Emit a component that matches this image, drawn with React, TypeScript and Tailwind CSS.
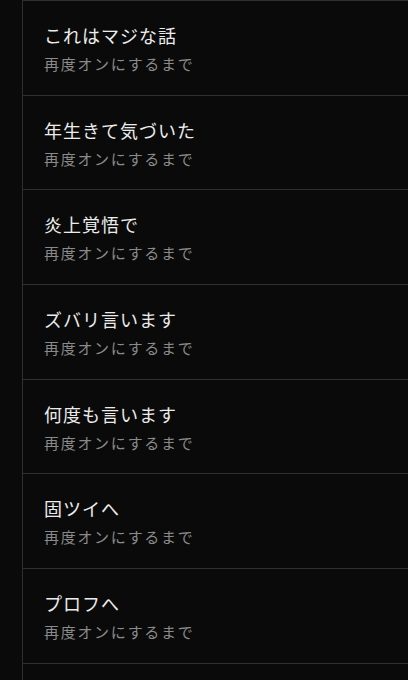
import React from "react";

const items = [
  "これはマジな話",
  "年生きて気づいた",
  "炎上覚悟で",
  "ズバリ言います",
  "何度も言います",
  "固ツイへ",
  "プロフへ",
  "",
];

export default function App() {
  return (
    <div
      className="flex h-[680px] w-[408px] overflow-hidden bg-[#0a0a0a]"
      style={{ fontFamily: '"Noto Sans CJK JP", "Noto Sans", sans-serif' }}
    >
      <div className="w-[22px] shrink-0 bg-[#0a0a0a]" />
      <div className="flex flex-1 flex-col border-l border-[#2f2f31]">
        {items.map((t, i) => (
          <div
            key={i}
            className="h-[94.7px] shrink-0 border-t border-[#2f2f31] pl-[21px] pt-[22px]"
          >
            {t && (
              <>
                <div className="text-[18px] leading-6 tracking-[1px] text-[#ececec]">
                  {t}
                </div>
                <div className="mt-[7px] text-[15px] leading-5 tracking-[1.7px] text-[#8a8a8a]">
                  再度オンにするまで
                </div>
              </>
            )}
          </div>
        ))}
      </div>
    </div>
  );
}
